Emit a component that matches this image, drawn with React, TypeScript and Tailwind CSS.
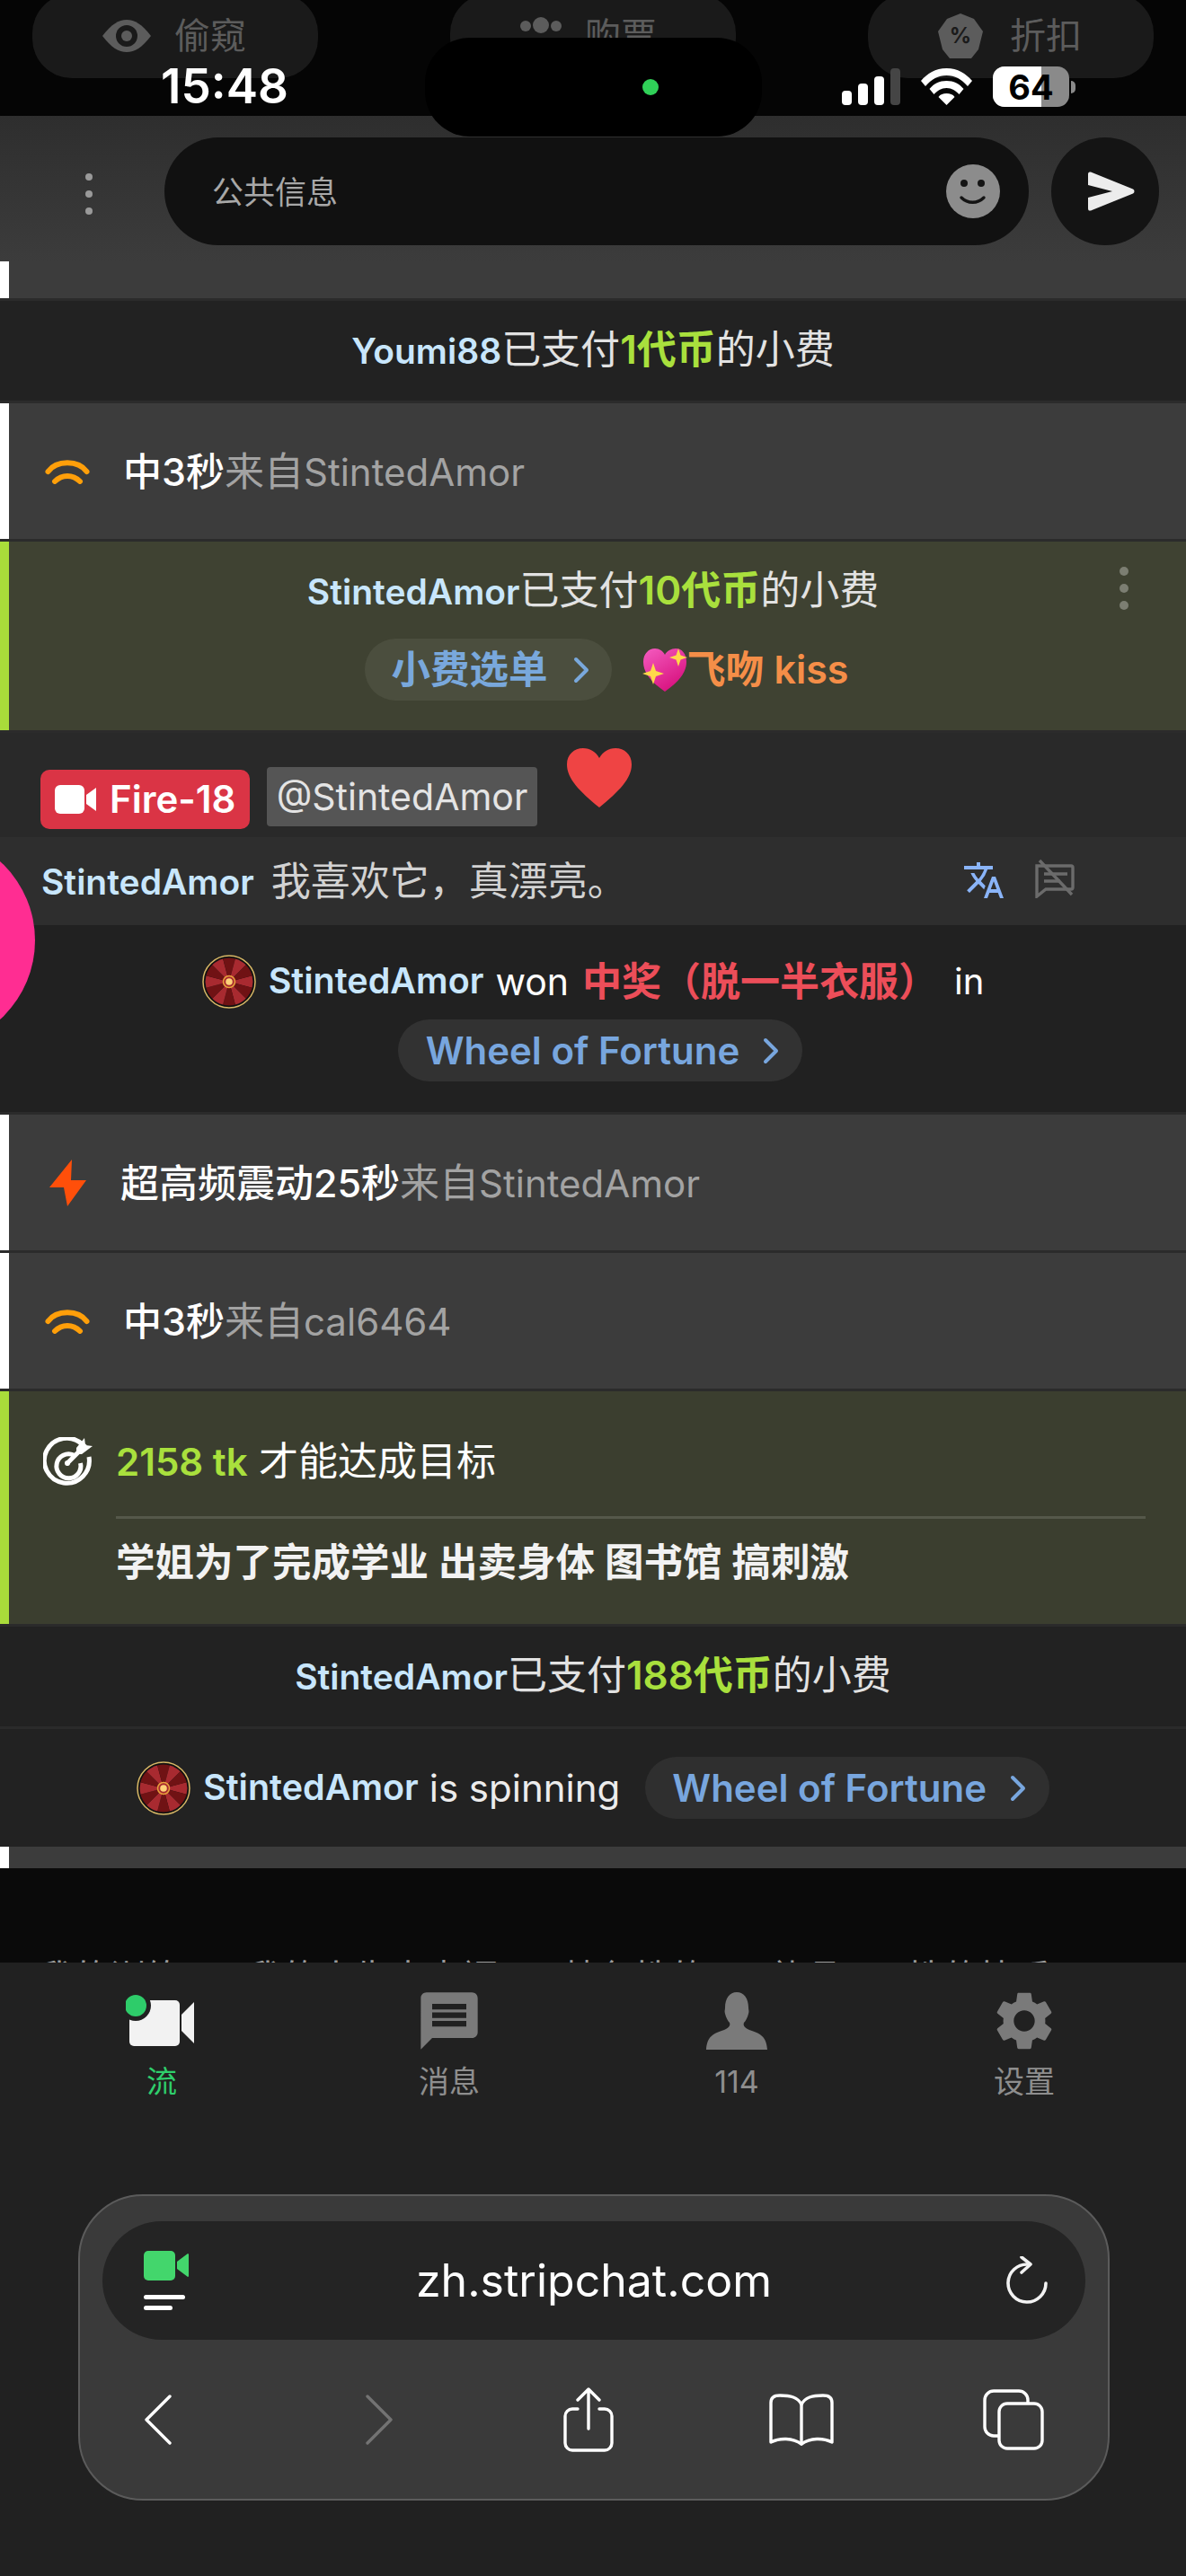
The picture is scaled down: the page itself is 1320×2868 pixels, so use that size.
import React from 'react';
import { MdMessage, MdSettings, MdTranslate } from 'react-icons/md';

const wedges = Array.from({ length: 12 }, (_, i) => i);

function Wheel() {
    return (
        <svg viewBox="0 0 60 60" className="w-[60px] h-[60px] shrink-0">
            <circle cx="30" cy="30" r="29" fill="#111" stroke="#d8b866" strokeWidth="1.5" />
            {wedges.map((i) => {
                const a = ((i * 30 - 15) * Math.PI) / 180;
                const b = ((i * 30 + 15) * Math.PI) / 180;
                const d = `M30 30L${30 + 26.5 * Math.cos(a)} ${30 + 26.5 * Math.sin(a)}A26.5 26.5 0 0 1 ${30 + 26.5 * Math.cos(b)} ${30 + 26.5 * Math.sin(b)}Z`;
                return <path key={i} d={d} fill={i % 2 === 0 ? '#a82a30' : '#701214'} />;
            })}
            <circle cx="30" cy="30" r="6.5" fill="#a82a30" stroke="#e8a23c" strokeWidth="1.5" />
            <circle cx="30" cy="30" r="3.8" fill="#ffd27a" />
        </svg>
    );
}

function Chevron({ className }: { className: string }) {
    return (
        <svg viewBox="0 0 20 30" fill="none" stroke="currentColor" strokeWidth="4" strokeLinecap="round" strokeLinejoin="round" className={className}>
            <path d="M4 3 16 15 4 27" />
        </svg>
    );
}

function Antenna() {
    return (
        <svg viewBox="0 0 50 28" fill="none" stroke="#ff9f0a" strokeWidth="6" strokeLinecap="round" className="w-[50px] h-[28px] shrink-0">
            <path d="M3.5 14C13 1 37 1 46.5 14" />
            <path d="M11 25c8-8 20-8 28 0" />
        </svg>
    );
}

function Bolt() {
    return (
        <svg viewBox="0 0 42 52" className="w-[42px] h-[52px] shrink-0">
            <path d="M25 0 0 31h16L20 52 41 23H24Z" fill="#ff4f0a" />
        </svg>
    );
}

function NoticeRow({ icon, bright, from, iconBox }: { icon: React.ReactNode; bright: string; from: string; iconBox: string }) {
    return (
        <div className="flex h-[151px] bg-[#3c3c3c]">
            <div className="w-[10px] bg-white" />
            <div className={`${iconBox} flex items-center`}>
                {icon}
                <div className="ml-[37px] text-[44px] leading-none whitespace-nowrap">
                    <span className="text-[43px] font-medium text-white">{bright}</span>
                    <span className="text-[#a3a3a3]">
                        来自<span className="text-[42px]">{from}</span>
                    </span>
                </div>
            </div>
        </div>
    );
}

function TipLine({ name, amount }: { name: string; amount: string }) {
    return (
        <div className="text-[44px] leading-none whitespace-nowrap text-[#e2e2e2]">
            <span className="text-[39px] font-semibold text-[#c8e6fc]">{name}</span>
            已支付
            <span className="font-semibold text-[#a9e03d]">{amount}</span>
            的小费
        </div>
    );
}

function TopPill({ icon, label, wide }: { icon: React.ReactNode; label: string; wide?: boolean }) {
    return (
        <div className={`flex h-[94px] w-[318px] mt-[-7px] items-center rounded-[44px] bg-[#1a1a1a] text-[#5c5c5c] ${wide ? 'gap-[30px] pl-[78px]' : 'gap-[26px] pl-[78px]'}`}>
            {icon}
            <span className="text-[40px] leading-none whitespace-nowrap">{label}</span>
        </div>
    );
}

function TabItem({ icon, label, active }: { icon: React.ReactNode; label: string; active?: boolean }) {
    return (
        <div className="flex flex-col items-center">
            <div className="flex h-[70px] items-center justify-center">{icon}</div>
            <div className={`mt-[16px] text-[34px] leading-none ${active ? 'text-[#2fcf6c]' : 'text-[#8e8e8e]'}`}>{label}</div>
        </div>
    );
}

export default function App() {
    return (
        <div className="relative h-[2868px] w-[1320px] overflow-hidden bg-[#212121] font-[Inter,'Noto_Sans_CJK_SC',sans-serif]">
            {/* top pills behind the status bar */}
            <div className="flex h-[129px] justify-between bg-[#050505] px-[36px]">
                <TopPill
                    label="偷窥"
                    icon={
                        <svg viewBox="0 0 54 36" className="w-[54px] h-[36px]">
                            <path d="M0 18C10 5 18 0 27 0s17 5 27 18C44 31 36 36 27 36S10 31 0 18Z" fill="#5c5c5c" />
                            <circle cx="27" cy="18" r="12" fill="#1a1a1a" />
                            <circle cx="27" cy="18" r="6" fill="#5c5c5c" />
                        </svg>
                    }
                />
                <TopPill
                    label="购票"
                    icon={
                        <svg viewBox="0 0 46 20" className="w-[46px] h-[20px] mb-[24px]">
                            <circle cx="6" cy="11" r="6" fill="#5c5c5c" />
                            <circle cx="23" cy="10" r="9" fill="#5c5c5c" />
                            <circle cx="40" cy="11" r="6" fill="#5c5c5c" />
                        </svg>
                    }
                />
                <TopPill
                    label="折扣"
                    wide
                    icon={
                        <svg viewBox="0 0 50 50" className="w-[50px] h-[50px]">
                            <path d="M25 0 40 6 50 20 45 40 37 50H13L5 40 0 20 10 6Z" fill="#5c5c5c" />
                            <text x="25" y="33" textAnchor="middle" fontSize="24" fontWeight="700" fill="#1a1a1a">%</text>
                        </svg>
                    }
                />
            </div>

            {/* message input */}
            <div className="flex h-[162px] items-start bg-gradient-to-b from-[#2e2e2e] to-[#3c3c3c] pt-[24px]">
                <div className="flex h-[120px] w-[183px] items-center pl-[95px] pt-[6px]">
                    <div className="flex flex-col gap-[11px]">
                        <div className="h-[8px] w-[8px] rounded-full bg-[#9a9a9a]" />
                        <div className="h-[8px] w-[8px] rounded-full bg-[#9a9a9a]" />
                        <div className="h-[8px] w-[8px] rounded-full bg-[#9a9a9a]" />
                    </div>
                </div>
                <div className="flex h-[120px] w-[962px] items-center justify-between rounded-full bg-[#111111] pl-[53px] pr-[32px]">
                    <span className="pt-[3px] text-[35px] leading-none text-[#a8a8a8]">公共信息</span>
                    <svg viewBox="0 0 60 60" className="w-[60px] h-[60px]">
                        <circle cx="30" cy="30" r="30" fill="#8c8c8c" />
                        <circle cx="20" cy="21" r="4" fill="#141414" />
                        <circle cx="39" cy="21" r="4" fill="#141414" />
                        <path d="M17 37c7 7 18 7 25 0" fill="none" stroke="#141414" strokeWidth="3.4" strokeLinecap="round" />
                    </svg>
                </div>
                <div className="ml-[25px] flex h-[120px] w-[120px] items-center justify-center rounded-full bg-[#141414]">
                    <svg viewBox="0 0 52 44" className="ml-[14px] w-[52px] h-[44px]">
                        <path d="M3 .6 50 19.500c2 1 2 4 0 5L3 43.400C1 44 0 43 0 41V29L27 22 0 15V3C0 1 1 0 3 .6Z" fill="#ececec" />
                    </svg>
                </div>
            </div>

            {/* chat feed */}
            <div className="flex flex-col gap-[3px] bg-[#2b2b2b]">
                <div className="flex h-[41px] bg-[#3c3c3c]">
                    <div className="w-[10px] bg-white" />
                </div>

                <div className="flex h-[111px] items-center justify-center bg-[#222222] pb-[4px]">
                    <TipLine name="Youmi88" amount="1代币" />
                </div>

                <NoticeRow icon={<Antenna />} iconBox="pl-[40px]" bright="中3秒" from="StintedAmor" />

                <div className="relative flex h-[210px] bg-[#3f4232]">
                    <div className="w-[10px] bg-[#a9dc3a]" />
                    <div className="flex flex-1 flex-col items-center pr-[10px] pt-[32px]">
                        <TipLine name="StintedAmor" amount="10代币" />
                        <div className="ml-[30px] mt-[32px] flex items-center gap-[34px]">
                            <div className="flex h-[69px] items-center gap-[27px] rounded-full bg-[#4b4e3e] pl-[30px] pr-[24px] text-[#79a8dc]">
                                <span className="text-[43.5px] font-semibold leading-none whitespace-nowrap">小费选单</span>
                                <Chevron className="w-[20px] h-[30px]" />
                            </div>
                            <div className="flex items-center text-[#f58e48]">
                                <svg viewBox="0 0 50 50" className="w-[50px] h-[50px] shrink-0">
                                    <defs>
                                        <linearGradient id="heartFill" x1="0" y1="0" x2="0.6" y2="1">
                                            <stop offset="0" stopColor="#f45cc0" />
                                            <stop offset="1" stopColor="#d8127f" />
                                        </linearGradient>
                                    </defs>
                                    <path d="M25 49C12 40 1 29 1 16 1 7 7 1 14 1c5 0 9 3 11 7 2-4 7-7 12-7 7 0 12 6 12 15 0 13-11 24-24 33Z" fill="url(#heartFill)" />
                                    <path d="M40 1l2.500 7.500L50 11l-7.500 2.500L40 21l-2.500-7.500L30 11l7.500-2.500Z" fill="#ffd84a" />
                                    <path d="M12 17l3 9 9 3-9 3-3 9-3-9-9-3 9-3Z" fill="#ffd84a" />
                                </svg>
                                <span className="text-[43px] font-semibold leading-none whitespace-nowrap">飞吻 kiss</span>
                            </div>
                        </div>
                    </div>
                    <div className="absolute right-[64px] top-[28px] flex flex-col gap-[9px]">
                        <div className="h-[10px] w-[10px] rounded-full bg-[#7c7e72]" />
                        <div className="h-[10px] w-[10px] rounded-full bg-[#7c7e72]" />
                        <div className="h-[10px] w-[10px] rounded-full bg-[#7c7e72]" />
                    </div>
                </div>

                <div className="flex flex-col">
                    <div className="relative flex h-[116px] items-start gap-[19px] bg-[#292929] pl-[45px] pt-[41px]">
                        <div className="flex h-[66px] w-[233px] items-center gap-[15px] rounded-[10px] bg-[#da3445] pl-[16px]">
                            <svg viewBox="0 0 46 32" className="w-[46px] h-[32px] shrink-0">
                                <rect x="0" y="0" width="33" height="32" rx="6" fill="#fff" />
                                <path d="M35 11 46 3v26l-11-8Z" fill="#fff" />
                            </svg>
                            <span className="text-[42px] font-semibold leading-none text-white whitespace-nowrap">Fire-18</span>
                        </div>
                        <div className="mt-[-3px] flex h-[66px] w-[301px] items-center justify-center rounded-[4px] bg-[#555555] text-[41px] leading-none text-[#e4e4e4]">
                            @StintedAmor
                        </div>
                        <svg viewBox="0 0 72 66" className="absolute left-[631px] top-[17px] w-[72px] h-[66px]">
                            <path d="M36 66C14 48 0 34 0 18 0 7 8 0 18 0c8 0 14 4 18 11C40 4 46 0 54 0c10 0 18 7 18 18 0 16-14 30-36 48Z" fill="#ef4444" />
                        </svg>
                    </div>

                    <div className="relative flex h-[98px] items-center bg-[#2e2e2e] pl-[46px]">
                        <span className="text-[39px] font-semibold leading-none text-[#c8e6fc]">StintedAmor</span>
                        <span className="ml-[19px] text-[44px] leading-none text-[#d2d2d2] whitespace-nowrap">我喜欢它，真漂亮。</span>
                        <MdTranslate className="absolute left-[1071px] top-[24px] w-[48px] h-[48px] text-[#8ab4f8]" />
                        <svg viewBox="0 0 48 44" fill="none" stroke="#6b6b6b" strokeWidth="3.4" className="absolute left-[1149px] top-[24px] w-[48px] h-[44px]">
                            <path d="M5 8h38a2 2 0 0 1 2 2v22a2 2 0 0 1-2 2H15L5 42Z" />
                            <path d="M13 17h26M13 25h18" />
                            <path d="M8 2 44 40" />
                        </svg>
                    </div>

                    <div className="flex h-[208px] flex-col items-center bg-[#212121] pt-[33px]">
                        <div className="flex items-center">
                            <Wheel />
                            <span className="ml-[14px] text-[39.500px] font-semibold leading-none text-[#c8e6fc]">StintedAmor</span>
                            <span className="ml-[13px] text-[41px] leading-none text-white">won</span>
                            <span className="ml-[15px] text-[44px] font-semibold leading-none text-[#ec4e59] whitespace-nowrap">中奖（脱一半衣服）</span>
                            <span className="ml-[18px] text-[40px] leading-none text-white">in</span>
                        </div>
                        <div className="ml-[16px] mt-[12px] flex h-[69px] items-center gap-[25px] rounded-full bg-[#323232] pl-[31px] pr-[25px] text-[#78a6de]">
                            <span className="text-[42px] font-semibold leading-none whitespace-nowrap">Wheel of Fortune</span>
                            <Chevron className="w-[20px] h-[30px]" />
                        </div>
                    </div>
                </div>

                <NoticeRow icon={<Bolt />} iconBox="pl-[45px]" bright="超高频震动25秒" from="StintedAmor" />
                <NoticeRow icon={<Antenna />} iconBox="pl-[40px]" bright="中3秒" from="cal6464" />

                <div className="flex h-[259px] bg-[#3b3e2f]">
                    <div className="w-[10px] bg-[#a9dc3a]" />
                    <div className="flex w-[119px] justify-start pl-[38px] pt-[51px]">
                        <svg viewBox="0 0 56 56" fill="none" stroke="#fff" className="w-[56px] h-[56px] shrink-0">
                            <path d="M44 8.500A25 25 0 1 0 51 22" strokeWidth="5" />
                            <path d="M34 20A13.500 13.500 0 1 0 41.500 29" strokeWidth="5" />
                            <path d="M27 29 46 10" strokeWidth="5" strokeLinecap="round" />
                            <path d="M37 12 46 1l1 8 8 1-12 9h-6Z" fill="#fff" stroke="none" />
                            <circle cx="27" cy="29" r="3" fill="#fff" stroke="none" />
                        </svg>
                    </div>
                    <div className="flex flex-1 flex-col pr-[45px] pt-[56px]">
                        <div className="text-[44px] leading-none text-white whitespace-nowrap">
                            <span className="text-[42px] font-semibold text-[#a9e03d]">2158 tk</span> 才能达成目标
                        </div>
                        <div className="mt-[39px] h-[3px] bg-[#55584a]" />
                        <div className="mt-[27px] text-[43.500px] font-semibold leading-none text-[#f2f2f2] whitespace-nowrap">学姐为了完成学业 出卖身体 图书馆 搞刺激</div>
                    </div>
                </div>

                <div className="flex h-[111px] items-center justify-center bg-[#222222] pb-[4px]">
                    <TipLine name="StintedAmor" amount="188代币" />
                </div>

                <div className="flex flex-col">
                    <div className="flex h-[131px] items-center justify-center bg-[#222222]">
                        <Wheel />
                        <span className="ml-[14px] text-[39.500px] font-semibold leading-none text-[#c8e6fc]">StintedAmor</span>
                        <span className="ml-[12px] text-[42px] leading-none text-[#ececec]">is spinning</span>
                        <div className="ml-[28px] flex h-[69px] items-center gap-[25px] rounded-full bg-[#2f2f2f] pl-[30px] pr-[25px] text-[#78a6de]">
                            <span className="text-[42px] font-semibold leading-none whitespace-nowrap">Wheel of Fortune</span>
                            <Chevron className="w-[20px] h-[30px]" />
                        </div>
                    </div>
                    <div className="flex h-[24px] bg-[#3c3c3c]">
                        <div className="w-[10px] bg-white" />
                    </div>
                </div>
            </div>

            {/* last message is cut off by the tab bar */}
            <div className="flex h-[105px] items-start gap-[72px] overflow-hidden bg-[#0a0a0a] pl-[42px] pt-[102px] text-[40px] leading-none text-[#9a9a9a] whitespace-nowrap">
                <span>我的训练</span>
                <span>我的人生大幸福</span>
                <span>特色性的</span>
                <span>礼品</span>
                <span>性的快乐</span>
            </div>

            {/* tab bar */}
            <div className="grid grid-cols-4 px-[20px] pt-[30px]">
                <TabItem
                    active
                    label="流"
                    icon={
                        <svg viewBox="0 0 80 64" className="w-[80px] h-[64px]">
                            <rect x="4" y="9" width="56" height="51" rx="5" fill="#f2f2f2" />
                            <path d="M62 25 76 11V57L62 43Z" fill="#f2f2f2" />
                            <circle cx="11" cy="15" r="17" fill="#212121" />
                            <circle cx="11" cy="15" r="12" fill="#2ecc6a" />
                        </svg>
                    }
                />
                <TabItem label="消息" icon={<MdMessage className="w-[76px] h-[76px] text-[#7a7a7a]" />} />
                <TabItem
                    label="114"
                    icon={
                        <svg viewBox="0 0 68 64" className="w-[68px] h-[64px]">
                            <path d="M34 0c8 0 13 7 13 17 0 3 1 4 0 7-1 4-3 8-5 10-1 3 0 5 6 8 12 4 19 7 20 22H0c1-15 8-18 20-22 6-3 7-5 6-8-2-2-4-6-5-10-1-3 0-4 0-7C21 7 26 0 34 0Z" fill="#7a7a7a" />
                        </svg>
                    }
                />
                <TabItem label="设置" icon={<MdSettings className="w-[78px] h-[78px] text-[#7a7a7a]" />} />
            </div>

            {/* browser toolbar */}
            <div className="ml-[87px] mt-[108px] h-[341px] w-[1148px] rounded-[72px] border-2 border-[#5b5b5b] bg-[#3a3a3a] px-[25px] pt-[28px]">
                <div className="flex h-[132px] items-center justify-between rounded-full bg-[#242424] pl-[46px] pr-[42px]">
                    <div className="flex flex-col">
                        <svg viewBox="0 0 50 34" className="w-[50px] h-[34px]">
                            <rect x="0" y="0" width="35" height="33" rx="5" fill="#43d66c" />
                            <path d="M37 12 49 3c1 0 1 1 1 2v22c0 1 0 2-1 2l-12-9Z" fill="#43d66c" />
                        </svg>
                        <div className="mt-[15px] h-[5px] w-[46px] rounded-full bg-white" />
                        <div className="mt-[7px] h-[5px] w-[32px] rounded-full bg-white" />
                    </div>
                    <span className="mr-[8px] text-[50px] leading-none text-white">zh.stripchat.com</span>
                    <svg viewBox="0 0 46 54" fill="none" stroke="#f2f2f2" strokeWidth="3.600" strokeLinecap="round" strokeLinejoin="round" className="w-[46px] h-[54px]">
                        <path d="M24 9A21 21 0 1 0 44 30" />
                        <path d="M17 1 27 9 17 18" />
                    </svg>
                </div>
                <div className="mt-[53px] flex items-center pl-[46px]">
                    <svg viewBox="0 0 32 56" fill="none" stroke="#fff" strokeWidth="3.400" strokeLinecap="round" strokeLinejoin="round" className="w-[32px] h-[56px]">
                        <path d="M29 2 3 28 29 54" />
                    </svg>
                    <svg viewBox="0 0 32 56" fill="none" stroke="#737373" strokeWidth="3.400" strokeLinecap="round" strokeLinejoin="round" className="ml-[214px] w-[32px] h-[56px]">
                        <path d="M3 2 29 28 3 54" />
                    </svg>
                    <svg viewBox="0 0 56 72" fill="none" stroke="#fff" strokeWidth="3.400" strokeLinecap="round" strokeLinejoin="round" className="ml-[189px] w-[56px] h-[72px]">
                        <path d="M16 24H10a8 8 0 0 0-8 8v30a8 8 0 0 0 8 8h36a8 8 0 0 0 8-8V32a8 8 0 0 0-8-8h-6" />
                        <path d="M28 46V3M16 14 28 2l12 12" />
                    </svg>
                    <svg viewBox="0 0 72 58" fill="none" stroke="#fff" strokeWidth="3.400" strokeLinecap="round" strokeLinejoin="round" className="ml-[173px] w-[72px] h-[58px]">
                        <path d="M36 12C32 4 24 2 12 2 6 2 2 4 2 10v44c10-5 24-5 34 2 10-7 24-7 34-2V10c0-6-4-8-10-8-12 0-20 2-24 10Z" />
                        <path d="M36 12v44" />
                    </svg>
                    <svg viewBox="0 0 68 68" fill="none" stroke="#fff" strokeWidth="3.400" strokeLinejoin="round" className="ml-[166px] w-[68px] h-[68px]">
                        <path d="M18 52h-6a10 10 0 0 1-10-10V12A10 10 0 0 1 12 2h28a10 10 0 0 1 10 10v4" />
                        <rect x="18" y="16" width="48" height="50" rx="9" />
                    </svg>
                </div>
            </div>

            {/* status bar */}
            <div className="absolute left-0 right-0 top-[74px] flex h-[45px] items-center justify-between pl-[179px] pr-[123px]">
                <span className="text-[53px] font-semibold leading-none text-white">15:48</span>
                <div className="flex items-center">
                    <svg viewBox="0 0 65 41" className="w-[65px] h-[41px]">
                        <rect x="0" y="25" width="11" height="16" rx="4" fill="#fff" />
                        <rect x="18" y="17" width="11" height="24" rx="4" fill="#fff" />
                        <rect x="36" y="9" width="11" height="32" rx="4" fill="#fff" />
                        <rect x="54" y="0" width="11" height="41" rx="4" fill="#454545" />
                    </svg>
                    <svg viewBox="0 0 57 41" fill="#fff" className="ml-[23px] w-[57px] h-[41px]">
                        <path d="M28.500 0C41 0 50 6 57 14l-5 6C45 12 38 8 28.500 8S12 12 5 20l-5-6C7 6 16 0 28.500 0Z" />
                        <path d="M28.500 14c8 0 14 3 19 9l-5 6c-4-4-8-7-14-7s-10 3-14 7l-5-6c5-6 11-9 19-9Z" />
                        <path d="M28.500 28c4 0 7 1 9 4l-9 9-9-9c2-3 5-4 9-4Z" />
                    </svg>
                    <div className="relative ml-[23px] flex h-[45px] w-[85px] overflow-hidden rounded-[13px] bg-[#8a8a8a]">
                        <div className="h-full w-[54px] bg-white" />
                        <span className="absolute inset-0 flex items-center justify-center text-[38px] font-bold leading-none text-black">64</span>
                    </div>
                    <div className="ml-[2px] h-[14px] w-[5px] rounded-r-full bg-[#8a8a8a]" />
                </div>
            </div>

            {/* dynamic island */}
            <div className="absolute left-[473px] top-[42px] flex h-[110px] w-[375px] items-center justify-center rounded-[50px] bg-black">
                <div className="ml-[127px] h-[18px] w-[18px] rounded-full bg-[#30d158]" />
            </div>

            {/* side pink button */}
            <div className="absolute left-[-199px] top-[928px] h-[238px] w-[238px] rounded-full bg-[#ff2d92]" />
        </div>
    );
}
